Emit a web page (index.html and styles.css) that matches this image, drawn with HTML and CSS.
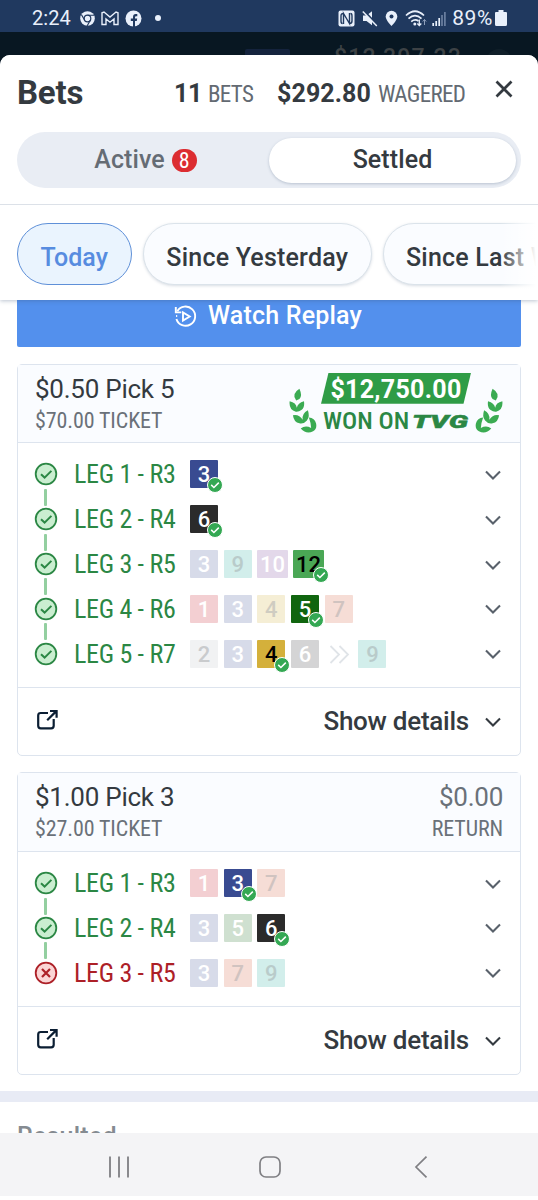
FILE: index.html
```html
<!DOCTYPE html>
<html lang="en">
<head>
<meta charset="utf-8">
<title>Bets</title>
<link rel="stylesheet" href="styles.css">
</head>
<body>
<svg class="defs" aria-hidden="true">
  <symbol id="chev" viewBox="0 0 18 12"><path d="M2 2.400 9 9.400l7-7" fill="none" stroke="currentColor" stroke-width="2.100"/></symbol>
  <symbol id="won" viewBox="0 0 24 24"><circle cx="12" cy="12" r="10.300" fill="#caeed0" stroke="#2b8744" stroke-width="1.800"/><path d="m7 12.200 3.600 3.400 6.800-6.700" fill="none" stroke="#2b8744" stroke-width="2"/></symbol>
  <symbol id="lost" viewBox="0 0 24 24"><circle cx="12" cy="12" r="10.300" fill="#fbd5d5" stroke="#ad2027" stroke-width="1.800"/><path d="m8 8 8 8M16 8l-8 8" fill="none" stroke="#ad2027" stroke-width="2.200"/></symbol>
  <symbol id="tick" viewBox="0 0 16 16"><circle cx="8" cy="8" r="7.500" fill="#34a853" stroke="#fff" stroke-width="1"/><path d="m4.200 7.900 2.700 2.600 4.900-4.900" fill="none" stroke="#fff" stroke-width="1.500"/></symbol>
  <symbol id="share" viewBox="0 0 22 22"><path d="M12 4H4.700Q2.200 4 2.200 6.500v10.300q0 2.500 2.500 2.500h10.500q2.500 0 2.500-2.500V10" fill="none" stroke="#0b1e33" stroke-width="2.200"/><path d="m11.200 11.200 8.800-8.800M14 2h6.600v6.800" fill="none" stroke="#0b1e33" stroke-width="2.200"/></symbol>
  <symbol id="laurel" viewBox="64 84 86 140"><g fill="#3bab52"><path d="M96 86Q106 108 96 117L86 122Q70 102 96 86Z"/><path d="M66 124Q86 128 88 144Q91 129 110 124Q113 143 102 151Q94 157 85 156Q63 150 66 124Z"/><path d="M76 167Q95 163 106 181Q103 162 122 152Q129 173 119 183Q109 195 96 192Q79 189 76 167Z"/><path d="M100 208Q114 196 132 206Q132 193 125 174Q143 176 147 192Q151 208 138 216Q118 227 100 208Z"/></g></symbol>
</svg>

<header class="status">
  <div class="status-left">
    <span class="clock">2:24</span>
    <svg width="15" height="15" viewBox="0 0 16 16"><circle cx="8" cy="8" r="7.800" fill="#e9f0fb"/><circle cx="8" cy="8" r="3.500" fill="#e9f0fb" stroke="#20395f" stroke-width="1.300"/><path d="M8 4.500h7M5 9.900 1.500 3.900M11 9.800 7.500 16" stroke="#20395f" stroke-width="1.200"/></svg>
    <svg class="gmail" width="18" height="15" viewBox="0 0 18 15"><path d="M1 13.500V1.800L3 1l6 5 6-5 2 .8v11.700h-4V8l-4 3.200L5 8v5.500z" fill="none" stroke="#e9f0fb" stroke-width="1.400"/></svg>
    <svg width="17" height="17" viewBox="0 0 17 17"><circle cx="8.500" cy="8.500" r="8" fill="#e9f0fb"/><path d="M8 17v-6H5.800V8.500H8V7q0-3 2.700-3h1.600v2.200H11q-1 0-1 1.200v1.100h2.200l-.4 2.500H10v6z" fill="#20395f"/></svg>
    <i class="dot"></i>
  </div>
  <div class="status-right">
    <svg width="17" height="17" viewBox="0 0 17 17"><rect x=".5" y=".5" width="16" height="16" rx="2" fill="#e9f0fb"/><path d="M5.500 14V3.500l6 10V3M5.500 3.500Q3 3.500 3 6v5q0 2.500 1.500 2.500M11.500 13.500Q14 13.500 14 11V6q0-2.500-1.500-2.500" fill="none" stroke="#20395f" stroke-width="1.400"/></svg>
    <svg width="16" height="17" viewBox="0 0 16 17"><path d="M1 5.500h3.500L10 1.300v14L4.500 11H1z" fill="#e9f0fb"/><path d="M1.200 0 16 15.600" stroke="#20395f" stroke-width="2"/><path d="m.8 1.400 14 14.600" stroke="#e9f0fb" stroke-width="1.500"/></svg>
    <svg width="13" height="17" viewBox="0 0 13 17"><path d="M6.500.8a5.800 5.800 0 0 0-5.800 5.800C.7 10.400 6.500 16 6.500 16s5.800-5.600 5.800-9.400A5.800 5.800 0 0 0 6.500.8Z" fill="#e9f0fb"/><circle cx="6.500" cy="6.500" r="2" fill="#20395f"/></svg>
    <svg width="22" height="17" viewBox="0 0 22 17"><g fill="none" stroke="#e9f0fb" stroke-width="1.700"><path d="M1 5.500q9-8.500 18 0M3.500 8.700q6.500-6 13 0M6.200 11.600q3.800-3 7.300-.6"/></g><circle cx="9.800" cy="14" r="1.500" fill="#e9f0fb"/><path d="M14.300 9.500v6m-2-2 2 2 2-2" fill="none" stroke="#e9f0fb" stroke-width="1.300"/><path d="M19.500 15V9.500m-1.700 2 1.700-2 1.700 2" fill="none" stroke="#8fa0bc"/></svg>
    <svg class="signal" width="14" height="15" viewBox="0 0 14 15"><path d="M1.200 15v-3M4.200 15v-5M7.200 15V7" stroke="#e9f0fb" stroke-width="1.700"/><path d="M10 15V4M12.900 15V1" stroke="#7589a9" stroke-width="1.500"/></svg>
    <span class="percent">89%</span>
    <svg class="battery" width="12" height="16" viewBox="0 0 12 16"><path d="M3.500 0h5v2H11q1 0 1 1v11.500q0 1.500-1.500 1.500h-9Q0 16 0 14.500V3q0-1 1-1h2.500z" fill="#e9f0fb"/></svg>
  </div>
</header>

<div class="backdrop"><span class="balance">$12,397.23</span><i class="backdrop-btn"></i><i class="backdrop-round"></i></div>

<main class="sheet">
  <div class="top">
    <div class="title-row">
      <h1>Bets</h1>
      <div class="totals"><b>11</b><span class="cond lbl-bets">BETS</span><b class="wager">$292.80</b><span class="cond lbl-wager">WAGERED</span></div>
      <svg class="close" width="18" height="18" viewBox="0 0 18 18"><path d="m1.500 1.500 15 15M16.500 1.500l-15 15" stroke="#343a40" stroke-width="2.700"/></svg>
    </div>
    <div class="segments">
      <div class="segment">Active<span class="count cond">8</span></div>
      <div class="segment on">Settled</div>
    </div>
    <div class="chips">
      <span class="chip today">Today</span>
      <span class="chip yesterday">Since Yesterday</span>
      <span class="chip week">Since Last Week</span>
    </div>
  </div>

  <div class="list">
    <div class="replay">
      <svg width="23" height="23" viewBox="0 0 23 23"><path d="M3.300 6.300A9.600 9.600 0 1 1 2.400 14M3.200 11H2.100" fill="none" stroke="#fff" stroke-width="1.900"/><path d="M1.800 2v5.400h5.500M9 7.400v8.200l6.700-4.100z" fill="none" stroke="#fff" stroke-width="1.900"/></svg>
      <span>Watch Replay</span>
    </div>

    <section class="card">
      <div class="card-head">
        <div><div class="bet">$0.50 Pick 5</div><div class="cond ticket">$70.00 TICKET</div></div>
        <div class="prize">
          <svg class="wreath" width="28" height="46"><use href="#laurel"/></svg>
          <div class="prize-mid">
            <div class="amount"><span>$12,750.00</span></div>
            <div class="wonon"><span class="cond">WON ON</span><svg width="60" height="24" viewBox="0 0 60 24"><text x="0" y="18.500" textLength="56" lengthAdjust="spacingAndGlyphs" class="tvg">TVG</text></svg></div>
          </div>
          <svg class="wreath flip" width="28" height="46"><use href="#laurel"/></svg>
        </div>
      </div>
      <div class="legs">
        <div class="leg"><svg class="state"><use href="#won"/></svg><span class="cond name">LEG 1 - R3</span><div class="picks"><b class="n3">3<svg><use href="#tick"/></svg></b></div><svg class="chev"><use href="#chev"/></svg></div>
        <div class="leg"><svg class="state"><use href="#won"/></svg><span class="cond name">LEG 2 - R4</span><div class="picks"><b class="n6">6<svg><use href="#tick"/></svg></b></div><svg class="chev"><use href="#chev"/></svg></div>
        <div class="leg"><svg class="state"><use href="#won"/></svg><span class="cond name">LEG 3 - R5</span><div class="picks"><b class="p3">3</b><b class="p9">9</b><b class="p10 wide">10</b><b class="n12 wide">12<svg><use href="#tick"/></svg></b></div><svg class="chev"><use href="#chev"/></svg></div>
        <div class="leg"><svg class="state"><use href="#won"/></svg><span class="cond name">LEG 4 - R6</span><div class="picks"><b class="p1">1</b><b class="p3">3</b><b class="p4">4</b><b class="n5">5<svg><use href="#tick"/></svg></b><b class="p7">7</b></div><svg class="chev"><use href="#chev"/></svg></div>
        <div class="leg"><svg class="state"><use href="#won"/></svg><span class="cond name">LEG 5 - R7</span><div class="picks"><b class="p2">2</b><b class="p3">3</b><b class="n4">4<svg><use href="#tick"/></svg></b><b class="p6">6</b><svg class="skip" viewBox="0 0 28 28"><path d="m5.500 6 8.500 8.500L5.500 23M14.500 6l8.500 8.500-8.500 8.500" fill="none" stroke="#e0e4e8" stroke-width="1.800"/></svg><b class="p9">9</b></div><svg class="chev"><use href="#chev"/></svg></div>
      </div>
      <div class="card-foot"><svg class="share"><use href="#share"/></svg><span>Show details</span><svg class="chev dark"><use href="#chev"/></svg></div>
    </section>

    <section class="card">
      <div class="card-head">
        <div><div class="bet">$1.00 Pick 3</div><div class="cond ticket">$27.00 TICKET</div></div>
        <div class="return"><div class="bet">$0.00</div><div class="cond ticket">RETURN</div></div>
      </div>
      <div class="legs">
        <div class="leg"><svg class="state"><use href="#won"/></svg><span class="cond name">LEG 1 - R3</span><div class="picks"><b class="p1">1</b><b class="n3">3<svg><use href="#tick"/></svg></b><b class="p7">7</b></div><svg class="chev"><use href="#chev"/></svg></div>
        <div class="leg"><svg class="state"><use href="#won"/></svg><span class="cond name">LEG 2 - R4</span><div class="picks"><b class="p3">3</b><b class="p5">5</b><b class="n6">6<svg><use href="#tick"/></svg></b></div><svg class="chev"><use href="#chev"/></svg></div>
        <div class="leg miss"><svg class="state"><use href="#lost"/></svg><span class="cond name">LEG 3 - R5</span><div class="picks"><b class="p3">3</b><b class="p7">7</b><b class="p9">9</b></div><svg class="chev"><use href="#chev"/></svg></div>
      </div>
      <div class="card-foot"><svg class="share"><use href="#share"/></svg><span>Show details</span><svg class="chev dark"><use href="#chev"/></svg></div>
    </section>
  </div>

  <div class="next">Resulted</div>
</main>

<nav class="navbar">
  <svg width="22" height="22" viewBox="0 0 22 22"><path d="M2 .5v21M11 .5v21M20 .5v21" stroke="#7f7f83" stroke-width="1.800"/></svg>
  <svg class="home" width="22" height="22" viewBox="0 0 22 22"><rect x="1" y="1" width="20" height="20" rx="6" fill="none" stroke="#7f7f83" stroke-width="1.700"/></svg>
  <svg width="14" height="22" viewBox="0 0 14 22"><path d="M12.500.7 2 11l10.500 10.300" fill="none" stroke="#7f7f83" stroke-width="1.700"/></svg>
</nav>
</body>
</html>
```
FILE: styles.css
```css
* { box-sizing: border-box; }
body { margin: 0; width: 538px; height: 1200px; overflow: hidden; background: #fff; font-family: Roboto, "Liberation Sans", sans-serif; color: #343a40; display: flex; flex-direction: column; }
svg { display: block; flex: none; }
.defs { position: absolute; width: 0; height: 0; }
.cond { font-family: "Roboto Condensed", Roboto, sans-serif; font-stretch: 75%; font-weight: 400; white-space: nowrap; }

.status { height: 32px; flex: none; background: #20395f; color: #e9f0fb; display: flex; justify-content: space-between; padding: 4px 31px 0 32px; }
.status-left, .status-right { display: flex; align-items: center; height: 28px; }
.clock { font-size: 20px; width: 48px; letter-spacing: .1px; }
.gmail { margin: 0 6px; }
.dot { width: 6px; height: 6px; border-radius: 50%; background: #e9f0fb; margin-left: 13px; }
.status-right { gap: 7px; }
.signal { margin-left: -2px; }
.percent { font-size: 21px; letter-spacing: .6px; margin: 0 -5px 0 -1px; }

.backdrop { height: 33px; margin-bottom: -10px; flex: none; background: #081722; position: relative; overflow: hidden; display: flex; justify-content: flex-end; padding: 14px 76px 0 0; }
.balance { font-size: 23px; font-weight: 500; line-height: 24px; color: #3d4245; letter-spacing: 1.200px; }
.backdrop-btn { position: absolute; left: 245px; top: 17px; width: 45px; height: 16px; background: #14233d; border-radius: 2px; }
.backdrop-round { position: absolute; left: 486px; top: 17px; width: 26px; height: 26px; border-radius: 50%; background: #101f29; }

.sheet { height: 1078px; flex: none; position: relative; background: #fff; border-radius: 10px 10px 0 0; overflow: hidden; }
.top { height: 245px; position: relative; background: #fff; box-shadow: 0 1px 4px rgba(60, 85, 120, .35); }
.title-row { height: 77px; padding: 0 24px 0 17px; display: flex; align-items: center; }
h1 { margin: 0; font-size: 33px; font-weight: 700; line-height: 75px; height: 77px; width: 157px; letter-spacing: -.2px; }
.totals { display: flex; align-items: baseline; width: 321px; white-space: nowrap; }
.totals b { font-size: 25px; font-weight: 700; width: 34px; letter-spacing: -.3px; }
.totals .wager { width: 101px; letter-spacing: .1px; }
.totals .cond { font-size: 23px; color: #636a72; letter-spacing: -.7px; }
.totals .lbl-bets { width: 69px; }
.close { margin-top: -9px; }

.segments { margin: 0 17px; height: 56px; border-radius: 28px; background: #e9edf4; padding: 6px 5px 5px; display: grid; grid-template-columns: 247px 247px; justify-content: space-between; }
.segment { display: flex; justify-content: center; align-items: center; font-size: 25px; font-weight: 500; color: #656c74; border-radius: 23px; padding-bottom: 2px; letter-spacing: .1px; }
.segment.on { background: #fff; color: #343a40; box-shadow: 0 1px 3px rgba(60, 85, 120, .28); }
.count { margin: 2px 0 0 7px; width: 25px; height: 23px; border-radius: 12px; background: #dc2d31; color: #fff; font-size: 22px; line-height: 23px; text-align: center; }

.chips { margin-top: 16px; border-top: 1px solid #dce1e8; height: 96px; padding: 18px 0 0 17px; display: flex; gap: 11px; overflow: hidden; position: relative; }
.chips::after { content: ""; position: absolute; right: 0; top: 1px; width: 38px; height: 94px; background: linear-gradient(90deg, rgba(255, 255, 255, 0), #fff 95%); }
.chip { flex: none; height: 62px; border-radius: 31px; border: 1px solid #dbe3ea; background: #fafcff; box-shadow: 0 1px 3px rgba(60, 85, 120, .2); font-size: 25px; font-weight: 500; line-height: 67px; text-align: center; white-space: nowrap; letter-spacing: .2px; }
.today { width: 114.500px; background: #eaf4fe; border-color: #5f90d8; color: #578ce0; box-shadow: none; letter-spacing: 0; }
.yesterday { width: 229.500px; }
.week { width: 232px; text-align: left; padding-left: 22px; }

.list { padding: 0 17px; }
.replay { height: 47px; background: #5390ed; color: #fff; border-radius: 0 0 2px 2px; display: flex; justify-content: center; gap: 11px; font-size: 25px; font-weight: 500; line-height: 32px; letter-spacing: .2px; padding-right: 2px; }
.replay svg { margin-top: 5px; }

.card { width: 504px; margin-top: 16.700px; border: 1px solid #dde4ee; border-radius: 5px; }
.card-head { height: 78.400px; background: #fafcff; border-bottom: 1px solid #dde4ee; padding: 8px 17px 0; display: flex; justify-content: space-between; }
.bet { font-size: 26px; line-height: 32px; letter-spacing: -.25px; }
.ticket { font-size: 22px; line-height: 31px; color: #6a7179; letter-spacing: -.1px; }
.return { text-align: right; }
.return .bet { color: #6a7179; }

.prize { display: flex; height: 62px; }
.wreath { margin-top: 15px; }
.flip { transform: scaleX(-1); }
.prize-mid { width: 158px; }
.amount { margin-left: 4px; width: 150px; height: 31px; background: #2f9c46; clip-path: polygon(5% 0, 100% 0, 95% 100%, 0 100%); color: #fff; font-size: 25px; font-weight: 700; line-height: 33px; text-align: center; letter-spacing: .3px; }
.wonon { display: flex; align-items: center; padding-left: 6px; gap: 2px; height: 34px; color: #2b8744; }
.wonon .cond { font-size: 24px; width: 87px; font-weight: 500; transform: scaleX(1.05); transform-origin: left; }
.tvg { font-family: Roboto, sans-serif; font-weight: 900; font-style: italic; font-size: 19px; fill: #2b8744; stroke: #2b8744; stroke-width: .5px; }

.legs { padding: 9px 17px 10.800px; }
.leg { height: 44.800px; display: flex; align-items: center; position: relative; }
.leg + .leg::before { content: ""; position: absolute; left: 9px; top: -8px; width: 3px; height: 17px; border-radius: 1px; background: #93cfa0; }
.state { width: 24px; height: 24px; margin-left: -1px; }
.name { font-size: 26px; width: 116px; margin-left: 16px; color: #2b8744; letter-spacing: -.3px; }
.miss .name { color: #ad2027; }
.picks { display: flex; gap: 5.700px; flex: 1; }
.picks b { position: relative; width: 28px; height: 28px; border-radius: 1px; font-size: 22px; font-weight: 500; line-height: 29px; text-align: center; }
.picks .wide { width: 30.300px; }
.picks b svg { position: absolute; right: -5px; bottom: -5px; width: 16px; height: 16px; }
.skip { width: 28px; height: 28px; }
.chev { width: 18px; height: 12px; color: #59616b; margin-right: 1px; margin-top: 1px; }
.n3 { background: #394b91; color: #fff; }
.n6 { background: #2b2b2b; color: #fff; }
.n12 { background: #4aa755; color: #000; }
.n5 { background: #10650f; color: #fff; }
.n4 { background: #d4b03b; color: #000; }
.p1 { background: #f3cfd2; color: #fff; }
.p2 { background: #f1f2f3; color: #c9cbcd; }
.p3 { background: #d7dbe9; color: #fff; }
.p4 { background: #f5eed5; color: #cfccc1; }
.p5 { background: #cfe0d0; color: #fff; }
.p6 { background: #d4d4d5; color: #fff; }
.p7 { background: #f6ddd6; color: #d0c3c0; }
.p9 { background: #d2eeeb; color: #b9cbca; }
.p10 { background: #e3d8ea; color: #fff; }

.card-foot { height: 67.800px; border-top: 1px solid #dde4ee; padding: 0 17px 0 18px; display: flex; align-items: center; font-size: 26px; font-weight: 500; letter-spacing: -.25px; }
.share { width: 22px; height: 22px; margin-right: auto; margin-top: -2px; }
.card-foot .chev { margin-left: 15px; color: #343a40; margin-top: 2px; }

.next { margin-top: 16.500px; border-top: 11px solid #e8ebf5; height: 60px; padding: 19px 17px 0; font-size: 25px; font-weight: 500; line-height: 32px; color: #858b91; letter-spacing: .2px; }

.navbar { height: 63px; flex: none; background: #f4f4f6; display: flex; justify-content: space-between; align-items: center; padding: 5px 110px 0 108px; }
.home { margin-right: 4px; }
```
